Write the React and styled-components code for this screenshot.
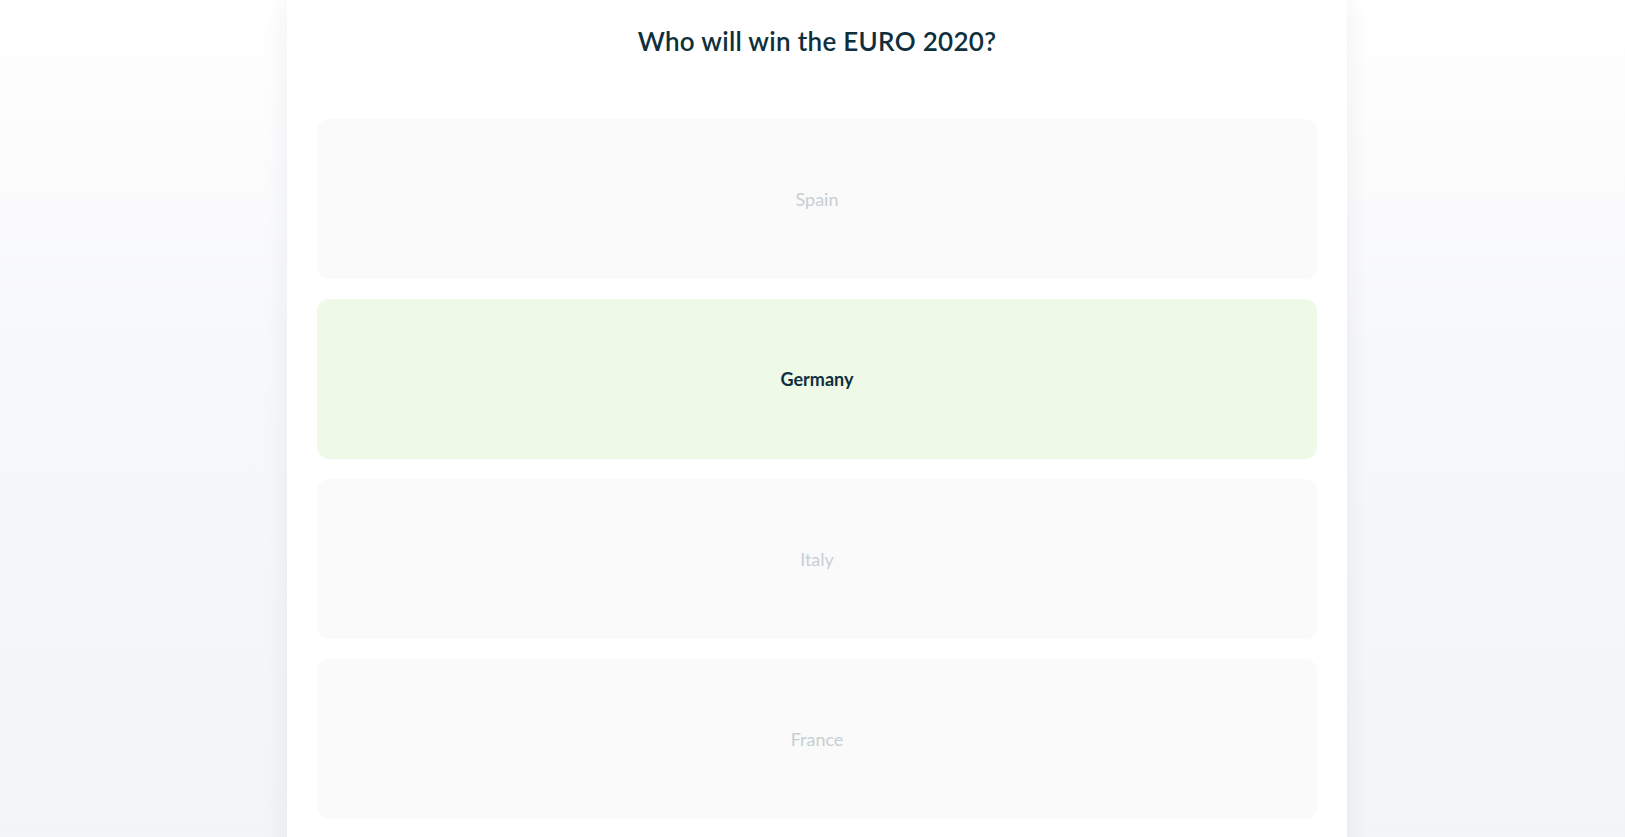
import React, { useState } from 'react'
import styled, { createGlobalStyle } from 'styled-components'

const GlobalStyle = createGlobalStyle`
  html, body {
    margin: 0;
    padding: 0;
    overflow: hidden;
  }
  body {
    min-height: 100vh;
    background: linear-gradient(to bottom, #ffffff 0%, #f7f8fa 40%, #f3f4f7 100%);
    font-family: Lato, "Noto Sans", sans-serif;
  }
`;

const Page = styled.div`
  padding-left: 9px;
`;

const Card = styled.div`
  width: 1000px;
  margin: 0 auto;
  padding: 26px 30px 18px;
  background: #fff;
  box-shadow: 0 0 24px rgba(30, 40, 70, 0.07);
  min-height: 820px;
  box-sizing: content-box;
`;

const Title = styled.h1`
  margin: 0 0 62px;
  text-align: center;
  font-size: 26px;
  line-height: 31px;
  font-weight: 600;
  color: #0e2f3c;
  letter-spacing: 0.3px;
`;

const Options = styled.div`
  display: flex;
  flex-direction: column;
  gap: 20px;
`;

const Option = styled.button`
  display: flex;
  align-items: center;
  justify-content: center;
  height: 160px;
  border: none;
  border-radius: 12px;
  font-family: inherit;
  font-size: 18px;
  cursor: pointer;
  background: ${p => (p.$selected ? '#eef9e8' : '#fafafa')};
  color: ${p => (p.$selected ? '#0e2f3c' : '#c6cfd3')};
  font-weight: ${p => (p.$selected ? 700 : 400)};
`;

const answers = ['Spain', 'Germany', 'Italy', 'France']

export default function App() {
  const [picked, setPicked] = useState('Germany')
  return (
    <Page>
      <GlobalStyle />
      <Card>
        <Title>Who will win the EURO 2020?</Title>
        <Options>
          {answers.map(a => (
            <Option key={a} $selected={a === picked} onClick={() => setPicked(a)}>
              {a}
            </Option>
          ))}
        </Options>
      </Card>
    </Page>
  )
}
